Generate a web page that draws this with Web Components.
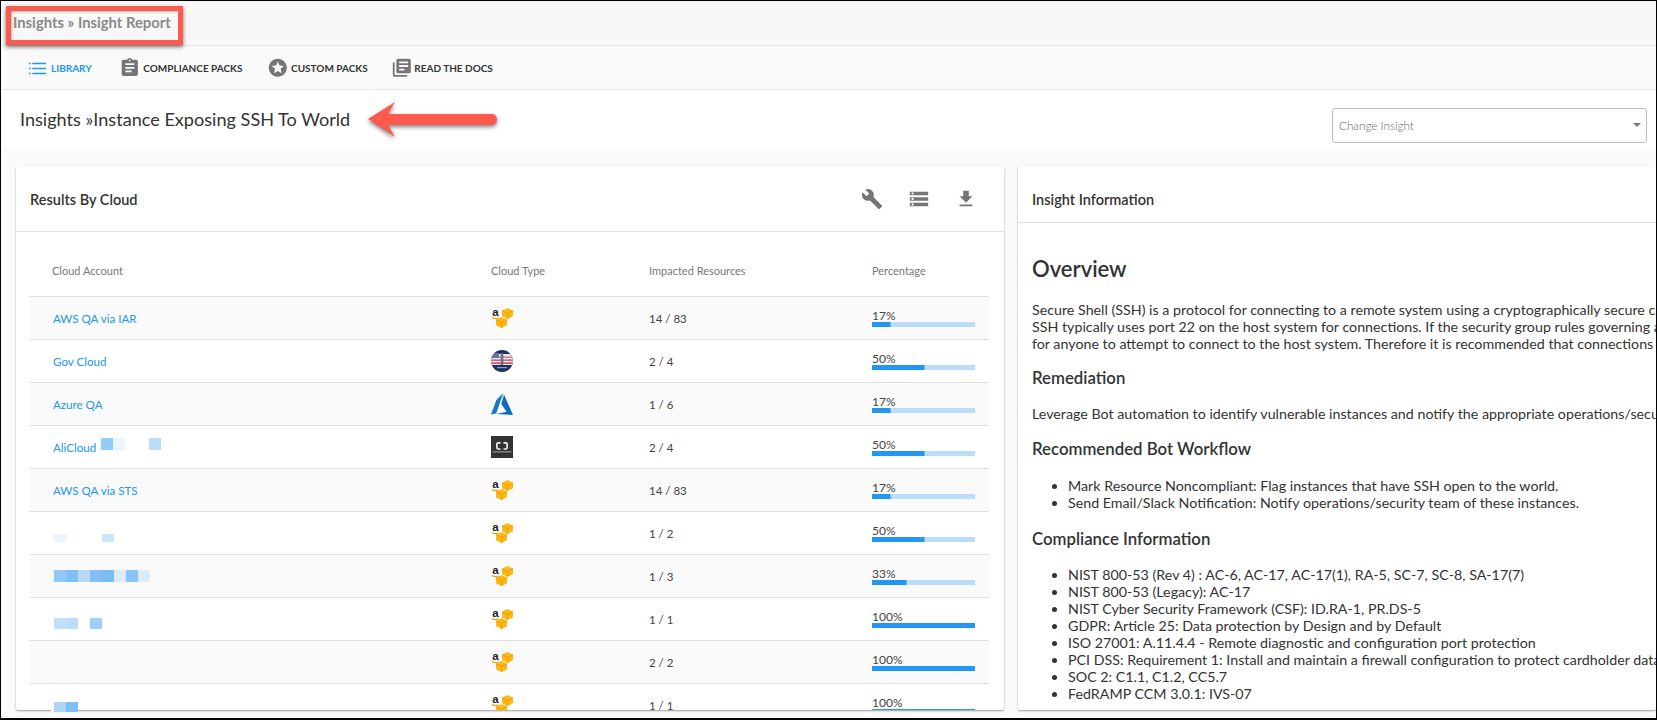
<!DOCTYPE html>
<html>
<head>
<meta charset="utf-8">
<title>Insight Report</title>
<style>
  html, body { margin: 0; height: 100%; overflow: hidden; background: #fafafa; }
  body { font-family: Lato, "Open Sans", sans-serif; }
</style>
</head>
<body>
<insight-app>
  <top-bar>Insights » Insight Report</top-bar>
  <nav-bar>
    <nav-item icon="list" active>LIBRARY</nav-item>
    <nav-item icon="assignment" style="gap:3px;margin-left:2px">COMPLIANCE PACKS</nav-item>
    <nav-item icon="stars">CUSTOM PACKS</nav-item>
    <nav-item icon="books" style="margin-left:-2px">READ THE DOCS</nav-item>
  </nav-bar>
  <page-head>
    Insights »Instance Exposing SSH To World
    <insight-select slot="side">Change Insight</insight-select>
  </page-head>
  <card-row>
    <results-card>
      <cloud-row account="AWS QA via IAR" cloud="aws" count="14 / 83" pct="17"></cloud-row>
      <cloud-row account="Gov Cloud" cloud="gov" count="2 / 4" pct="50"></cloud-row>
      <cloud-row account="Azure QA" cloud="azure" count="1 / 6" pct="17"></cloud-row>
      <cloud-row account="AliCloud" cloud="ali" count="2 / 4" pct="50">
        <redact-blocks style="left:71px;top:12px" height="12" cells="#93cbfa,#ecf5fd,,,#bcddfa"></redact-blocks>
      </cloud-row>
      <cloud-row account="AWS QA via STS" cloud="aws" count="14 / 83" pct="17"></cloud-row>
      <cloud-row cloud="aws" count="1 / 2" pct="50">
        <redact-blocks style="left:24px;top:22px" height="8" cells="#ebf4fd,,,,#cbe5fb"></redact-blocks>
      </cloud-row>
      <cloud-row cloud="aws" count="1 / 3" pct="33">
        <redact-blocks style="left:24px;top:15px" height="12" cells="#90c8f7,#7fbff6,#b8d9f6,#86bff6,#7cbdf6,#dcebfa,#8bc5f7,#dcebfa"></redact-blocks>
      </cloud-row>
      <cloud-row cloud="aws" count="1 / 1" pct="100">
        <redact-blocks style="left:24px;top:20px" height="11" cells="#c0dffb,#bddcfb,,#9bcffb"></redact-blocks>
      </cloud-row>
      <cloud-row cloud="aws" count="2 / 2" pct="100"></cloud-row>
      <cloud-row cloud="aws" count="1 / 1" pct="100"></cloud-row>
      <redact-blocks slot="tail" height="10" cells="#aed4fa,#80bff6"></redact-blocks>
    </results-card>
    <info-card>
      <h2>Overview</h2>
      <p>Secure Shell (SSH) is a protocol for connecting to a remote system using a cryptographically secure channel<br>
      SSH typically uses port 22 on the host system for connections. If the security group rules governing access<br>
      for anyone to attempt to connect to the host system. Therefore it is recommended that connections to</p>
      <h3 style="margin:16px 0 17px">Remediation</h3>
      <p>Leverage Bot automation to identify vulnerable instances and notify the appropriate operations/security</p>
      <h3 style="margin-top:17px">Recommended Bot Workflow</h3>
      <ul style="margin-top:18px">
        <li>Mark Resource Noncompliant: Flag instances that have SSH open to the world.</li>
        <li>Send Email/Slack Notification: Notify operations/security team of these instances.</li>
      </ul>
      <h3>Compliance Information</h3>
      <ul>
        <li>NIST 800-53 (Rev 4) : AC-6, AC-17, AC-17(1), RA-5, SC-7, SC-8, SA-17(7)</li>
        <li>NIST 800-53 (Legacy): AC-17</li>
        <li>NIST Cyber Security Framework (CSF): ID.RA-1, PR.DS-5</li>
        <li>GDPR: Article 25: Data protection by Design and by Default</li>
        <li>ISO 27001: A.11.4.4 - Remote diagnostic and configuration port protection</li>
        <li>PCI DSS: Requirement 1: Install and maintain a firewall configuration to protect cardholder data</li>
        <li>SOC 2: C1.1, C1.2, CC5.7</li>
        <li>FedRAMP CCM 3.0.1: IVS-07</li>
      </ul>
    </info-card>
  </card-row>
  <red-box></red-box>
  <red-arrow></red-arrow>
</insight-app>

<script>
const ICONS = {
  list: '<path d="M0 1h2.4v2H0zM0 8h2.4v2H0zM0 15h2.4v2H0zM4.6 1H24v2H4.6zM4.6 8H24v2H4.6zM4.6 15H24v2H4.6z"/>',
  assignment: '<path d="M19 3h-4.18C14.4 1.84 13.3 1 12 1c-1.3 0-2.4.84-2.82 2H5c-1.1 0-2 .9-2 2v14c0 1.1.9 2 2 2h14c1.1 0 2-.9 2-2V5c0-1.1-.9-2-2-2zm-7 0c.55 0 1 .45 1 1s-.45 1-1 1-1-.45-1-1 .45-1 1-1zm2 14H7v-2h7v2zm3-4H7v-2h10v2zm0-4H7V7h10v2z"/>',
  stars: '<path d="M11.99 2C6.47 2 2 6.48 2 12s4.47 10 9.99 10C17.52 22 22 17.52 22 12S17.52 2 11.99 2zm4.24 16L12 15.45 7.77 18l1.12-4.81-3.73-3.23 4.92-.42L12 5l1.92 4.53 4.92.42-3.73 3.23L16.23 18z"/>',
  books: '<path d="M4 6H2v14c0 1.1.9 2 2 2h14v-2H4V6zm16-4H8c-1.1 0-2 .9-2 2v12c0 1.1.9 2 2 2h12c1.1 0 2-.9 2-2V4c0-1.1-.9-2-2-2zm-1 9H9V9h10v2zm-4 4H9v-2h6v2zm4-8H9V5h10v2z"/>',
  build: '<path d="M22.7 19l-9.1-9.1c.9-2.3.4-5-1.5-6.9-2-2-5-2.4-7.4-1.3L9 6 6 9 1.6 4.7C.4 7.1.9 10.1 2.9 12.1c1.9 1.9 4.6 2.4 6.9 1.5l9.1 9.1c.4.4 1 .4 1.4 0l2.3-2.3c.5-.4.5-1.1.1-1.4z"/>',
  storage: '<path d="M2 20h20v-4H2v4zm2-3h2v2H4v-2zM2 4v4h20V4H2zm4 3H4V5h2v2zm-4 7h20v-4H2v4zm2-3h2v2H4v-2z"/>',
  download: '<path d="M19 9h-4V3H9v6H5l7 7 7-7zM5 18v2h14v-2H5z"/>'
};

// one box of the aws logo, drawn as a flat hexagon with its inner edges
const cube = (x, y, r) => `
  <path fill="#fdb813" d="M${x} ${y - r}l${r} ${r / 2}v${r}l${-r} ${r / 2}l${-r} ${-r / 2}v${-r}z"/>
  <path fill="none" stroke="#e09a0c" stroke-width=".8" d="M${x} ${y + r}v${-r}l${-r} ${-r / 2}M${x} ${y}l${r} ${-r / 2}"/>`;

const CLOUDS = {
  aws: `<svg width="22" height="20" viewBox="0 0 22 20">
      ${cube(16.5, 5.5, 5.5)}
      ${cube(10.5, 14.5, 5.5)}
      <text x="4.500" y="8" font-size="11.500" font-weight="700" font-family="Liberation Sans, sans-serif" text-anchor="middle" fill="#222">a</text>
      <path d="M1 9.500c2 1.400 4.500 1.400 6.500.2" fill="none" stroke="#ec9a1c" stroke-width="1.100"/>
    </svg>`,
  gov: `<svg width="22" height="22" viewBox="0 0 22 22" style="filter:blur(.35px)">
      <defs><clipPath id="c"><circle cx="11" cy="11" r="11"/></clipPath></defs>
      <g clip-path="url(#c)">
        <rect width="22" height="22" fill="#1d3262"/>
        <rect y="4" width="22" height="11" fill="#eceaf0"/>
        <rect y="6.400" width="22" height="1.500" fill="#d47a88"/>
        <rect y="9.400" width="22" height="1.500" fill="#cf5d70"/>
        <rect y="12.400" width="22" height="1.500" fill="#c2475c"/>
        <rect y="3" width="8" height="5" fill="#5f75a8"/>
        <rect x="9.700" y="3" width="2.600" height="12" fill="#6a6f86"/>
        <rect x="6" y="17" width="10" height="1.200" fill="#8e9bbb"/>
      </g>
    </svg>`,
  azure: `<svg width="22" height="22" viewBox="0 0 22 19" preserveAspectRatio="none">
      <path fill="#1a76c9" d="M12.300 0L5.400 6 0 18.600l5.200-.9z"/>
      <path fill="#0f6cbd" d="M13 1.300l-2.700 8.200 5.300 6.700-10.300 1.900L22 19z"/>
    </svg>`,
  ali: `<svg width="22" height="22" viewBox="0 0 22 22">
      <rect width="22" height="22" fill="#333"/>
      <path d="M9.500 6.800H7.200c-.8 0-1.300.5-1.300 1.200v3.800c0 .7.500 1.200 1.300 1.200h2.300M12.500 6.800h2.300c.8 0 1.300.5 1.300 1.200v3.800c0 .7-.5 1.200-1.300 1.200h-2.300" fill="none" stroke="#eee" stroke-width="1.700"/>
      <rect x="1.500" y="15" width="19" height="1.600" fill="#7d7d7d"/>
    </svg>`
};

class InsightApp extends HTMLElement {
  constructor() {
    super();
    this.attachShadow({mode: 'open'}).innerHTML = `
      <style>
        :host {
          border-color: #000;
          border-style: solid;
          border-width: 1px 1px 2px 1px;
          box-sizing: border-box;
          color: #333;
          display: flex;
          flex-direction: column;
          height: 720px;
          overflow: hidden;
          position: relative;
          width: 1657px;
        }
      </style>
      <slot></slot>`;
  }
}

class TopBar extends HTMLElement {
  constructor() {
    super();
    this.attachShadow({mode: 'open'}).innerHTML = `
      <style>
        :host {
          align-items: center;
          background: #f8f8f8;
          border-bottom: 1px solid #e8e8e8;
          box-sizing: border-box;
          color: #8a8a8a;
          display: flex;
          flex: none;
          font-size: 14.8px;
          font-weight: 700;
          height: 45px;
          padding: 0 0 2px 12px;
        }
      </style>
      <slot></slot>`;
  }
}

class NavBar extends HTMLElement {
  constructor() {
    super();
    this.attachShadow({mode: 'open'}).innerHTML = `
      <style>
        :host {
          align-items: center;
          background: #fafafa;
          border-bottom: 1px solid #e6e6e6;
          box-sizing: border-box;
          display: flex;
          flex: none;
          gap: 25px;
          height: 44px;
          padding: 1px 0 0 28px;
        }
      </style>
      <slot></slot>`;
  }
}

class NavItem extends HTMLElement {
  constructor() {
    super();
    const name = this.getAttribute('icon');
    const size = name === 'list' ? 17 : 21.6;
    this.attachShadow({mode: 'open'}).innerHTML = `
      <style>
        :host {
          align-items: center;
          color: #333;
          display: flex;
          font-size: 10px;
          font-weight: 700;
          gap: 2px;
        }
        :host([active]) { color: #2196f3; gap: 5px; }
        svg { fill: #757575; flex: none; }
        :host([active]) svg { fill: #2196f3; }
      </style>
      <svg width="${size}" height="${size}" viewBox="0 0 24 ${name === 'list' ? 18 : 24}">${ICONS[name]}</svg>
      <slot></slot>`;
  }
}

class PageHead extends HTMLElement {
  constructor() {
    super();
    this.attachShadow({mode: 'open'}).innerHTML = `
      <style>
        :host {
          align-items: center;
          background: #fff;
          box-sizing: border-box;
          color: #333;
          display: flex;
          flex: none;
          font-size: 18.1px;
          height: 59px;
          justify-content: space-between;
          padding: 0 9px 2px 19px;
        }
      </style>
      <span><slot></slot></span>
      <slot name="side"></slot>`;
  }
}

class InsightSelect extends HTMLElement {
  constructor() {
    super();
    this.attachShadow({mode: 'open'}).innerHTML = `
      <style>
        :host {
          align-items: center;
          border: 1px solid #bdbdbd;
          border-radius: 3px;
          box-sizing: border-box;
          color: #666;
          display: flex;
          font-size: 11.7px;
          font-weight: 300;
          height: 35px;
          justify-content: space-between;
          margin-top: 13px;
          padding: 0 5px 0 6px;
          width: 315px;
        }
        i {
          border-left: 4px solid transparent;
          border-right: 4px solid transparent;
          border-top: 4px solid #777;
          display: block;
        }
      </style>
      <span><slot></slot></span>
      <i></i>`;
  }
}

class CardRow extends HTMLElement {
  constructor() {
    super();
    this.attachShadow({mode: 'open'}).innerHTML = `
      <style>
        :host {
          box-sizing: border-box;
          display: grid;
          flex: none;
          gap: 14px;
          grid-template-columns: 988px 1fr;
          grid-template-rows: 544px;
          height: 561px;
          padding: 17px 0 0 15px;
        }
      </style>
      <slot></slot>`;
  }
}

class ResultsCard extends HTMLElement {
  constructor() {
    super();
    this.attachShadow({mode: 'open'}).innerHTML = `
      <style>
        :host {
          background: #fff;
          border-radius: 2px;
          box-shadow: 0 1px 2px rgba(0,0,0,.38);
          display: flex;
          flex-direction: column;
          min-height: 0;
          position: relative;
        }
        header {
          align-items: center;
          border-bottom: 1px solid #e0e0e0;
          box-sizing: border-box;
          display: flex;
          flex: none;
          height: 66px;
          justify-content: space-between;
          padding: 1px 27px 0 14px;
        }
        h4 { color: #333; font-size: 14.5px; font-weight: 600; margin: 0; }
        .tools { display: flex; gap: 25px; margin-top: -1px; }
        .tools svg { display: block; fill: #757575; height: 22px; width: 22px; }
        .table {
          flex: 1;
          min-height: 0;
          overflow: hidden;
          padding: 0 15px 0 14px;
        }
        .head {
          align-items: center;
          border-bottom: 1px solid #e0e0e0;
          box-sizing: border-box;
          color: #777;
          display: grid;
          font-size: 11px;
          grid-template-columns: 461px 158px 223px 1fr;
          height: 65px;
          padding-top: 12px;
        }
        .head span:first-child { padding-left: 22px; }
        .tail {
          background: #fff;
          bottom: -2px;
          height: 10px;
          left: 35px;
          padding-left: 3px;
          position: absolute;
        }
      </style>
      <header>
        <h4>Results By Cloud</h4>
        <div class="tools">
          <svg viewBox="0 0 24 24">${ICONS.build}</svg>
          <svg viewBox="0 0 24 24">${ICONS.storage}</svg>
          <svg viewBox="0 0 24 24">${ICONS.download}</svg>
        </div>
      </header>
      <div class="table">
        <div class="head">
          <span>Cloud Account</span><span>Cloud Type</span><span>Impacted Resources</span><span>Percentage</span>
        </div>
        <slot></slot>
      </div>
      <div class="tail"><slot name="tail"></slot></div>`;
  }
}

class CloudRow extends HTMLElement {
  constructor() {
    super();
    const account = this.getAttribute('account') || '';
    const cloud = this.getAttribute('cloud');
    this.attachShadow({mode: 'open'}).innerHTML = `
      <style>
        :host {
          align-items: center;
          border-bottom: 1px solid #e0e0e0;
          box-sizing: border-box;
          color: #444;
          display: grid;
          font-size: 11.5px;
          grid-template-columns: 461px 158px 223px 1fr;
          height: 43px;
          position: relative;
        }
        :host(:nth-of-type(odd)) { background: #fafafa; }
        a { color: #2196f3; font-size: 11.6px; padding-left: 23px; text-decoration: none; }
        .icon { align-items: center; display: flex; }
      </style>
      <a>${account}</a>
      <div class="icon">${CLOUDS[cloud]}</div>
      <span>${this.getAttribute('count')}</span>
      <pct-bar value="${this.getAttribute('pct')}"></pct-bar>
      <slot></slot>`;
  }
}

class PctBar extends HTMLElement {
  constructor() {
    super();
    const value = this.getAttribute('value');
    this.attachShadow({mode: 'open'}).innerHTML = `
      <style>
        :host { color: #444; display: block; font-size: 12px; line-height: 13px; width: 103px; }
        .track { background: #b9ddfb; height: 5px; overflow: hidden; }
        .fill { background: #2196f3; box-shadow: 1px 0 0 #6db9f7; height: 100%; width: ${value}%; }
      </style>
      <div>${value}%</div>
      <div class="track"><div class="fill"></div></div>`;
  }
}

class RedactBlocks extends HTMLElement {
  constructor() {
    super();
    const cells = this.getAttribute('cells').split(',');
    const height = this.getAttribute('height');
    this.attachShadow({mode: 'open'}).innerHTML = `
      <style>
        :host { display: flex; position: absolute; }
        :host([slot]) { position: static; }
        i { display: block; height: ${height}px; width: 12px; }
      </style>
      ${cells.map(c => `<i style="background:${c || 'transparent'}"></i>`).join('')}`;
  }
}

class InfoCard extends HTMLElement {
  constructor() {
    super();
    this.attachShadow({mode: 'open'}).innerHTML = `
      <style>
        :host {
          background: #fff;
          border-radius: 2px;
          box-shadow: 0 1px 2px rgba(0,0,0,.38);
          display: block;
          min-height: 0;
          min-width: 0;
          overflow: hidden;
        }
        header {
          align-items: center;
          border-bottom: 1px solid #e0e0e0;
          box-sizing: border-box;
          color: #333;
          display: flex;
          font-size: 14.5px;
          font-weight: 600;
          height: 57px;
          padding: 11px 0 0 14px;
        }
        .body {
          color: #333;
          font-size: 14.25px;
          line-height: 17px;
          padding: 0 0 0 14px;
          white-space: nowrap;
        }
      </style>
      <header>Insight Information</header>
      <div class="body"><slot></slot></div>`;
  }
}

class RedBox extends HTMLElement {
  constructor() {
    super();
    this.attachShadow({mode: 'open'}).innerHTML = `
      <style>
        :host {
          border: 5px solid #fb5a4c;
          box-shadow: 0 2px 4px rgba(0,0,0,.55), inset 1px 1px 2px rgba(0,0,0,.25);
          box-sizing: border-box;
          height: 39px;
          left: 5px;
          position: absolute;
          top: 5px;
          width: 177px;
        }
      </style>`;
  }
}

class RedArrow extends HTMLElement {
  constructor() {
    super();
    this.attachShadow({mode: 'open'}).innerHTML = `
      <style>
        :host { left: 366px; position: absolute; top: 99px; }
        svg { display: block; filter: drop-shadow(0 2px 2px rgba(0,0,0,.5)); overflow: visible; }
      </style>
      <svg width="132" height="38" viewBox="0 0 132 38">
        <path fill="#fb5a4c" d="M1 19L28 2l-7 12h103.500c3 0 5.500 2.200 5.500 5.500s-2.500 5.500-5.500 5.500H21l7 12z"/>
      </svg>`;
  }
}

customElements.define('insight-app', InsightApp);
customElements.define('top-bar', TopBar);
customElements.define('nav-bar', NavBar);
customElements.define('nav-item', NavItem);
customElements.define('page-head', PageHead);
customElements.define('insight-select', InsightSelect);
customElements.define('card-row', CardRow);
customElements.define('results-card', ResultsCard);
customElements.define('cloud-row', CloudRow);
customElements.define('pct-bar', PctBar);
customElements.define('redact-blocks', RedactBlocks);
customElements.define('info-card', InfoCard);
customElements.define('red-box', RedBox);
customElements.define('red-arrow', RedArrow);
</script>
<style>
  info-card h2 { color: #333; font-size: 22px; font-weight: 600; line-height: 30px; margin: 31px 0 17px; }
  info-card h3 { color: #333; font-size: 16.8px; font-weight: 600; line-height: 20px; margin: 18px 0 17px; }
  info-card p { margin: 0; }
  info-card ul { margin: 0; padding-left: 36px; }
</style>
</body>
</html>
